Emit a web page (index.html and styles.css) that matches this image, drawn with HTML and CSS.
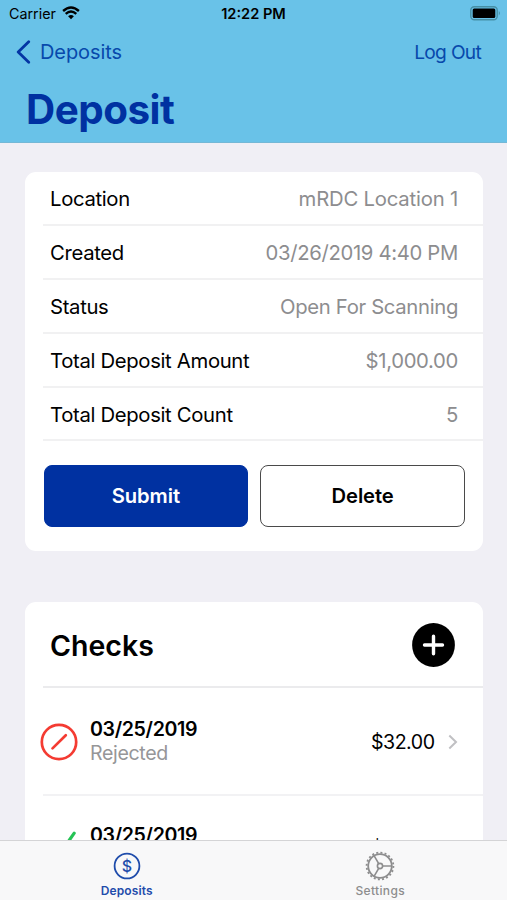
FILE: index.html
```html
<!DOCTYPE html>
<html lang="en">
<head>
<meta charset="utf-8">
<title>Deposit</title>
<link rel="stylesheet" href="styles.css">
</head>
<body>
<div class="app">
  <header class="header">
    <div class="status-bar">
      <div class="carrier"><span>Carrier</span>
        <svg class="wifi" viewBox="0 0 18 14"><path d="M9 13.3 6.1 10.3Q9 7.9 11.9 10.3Z" fill="#000"/><path d="M3.7 7.9Q9 3.3 14.3 7.9M1.1 5Q9-2 16.9 5" fill="none" stroke="#000" stroke-width="2.4"/></svg>
      </div>
      <div class="clock">12:22 PM</div>
      <svg class="battery" viewBox="0 0 31 15"><rect x=".8" y=".8" width="26.4" height="12.9" rx="3.5" fill="none" stroke="#468fa5" stroke-width="1.4"/><rect x="2.7" y="2.6" width="22.6" height="9.3" rx="1.5"/><path d="M28.8 5Q31 7.2 28.8 9.5Z" fill="#468fa5"/></svg>
    </div>
    <nav class="nav-bar">
      <a class="back"><svg viewBox="0 0 15 24"><path d="M12.7 1.7 2.2 12 12.7 22.3" fill="none" stroke="#0435a4" stroke-width="2.8" stroke-linecap="round" stroke-linejoin="round"/></svg><span>Deposits</span></a>
      <a class="logout">Log Out</a>
    </nav>
    <h1>Deposit</h1>
  </header>

  <main class="content">
    <section class="card summary">
      <dl class="rows">
        <div class="row"><dt>Location</dt><dd class="wide">mRDC Location 1</dd></div>
        <div class="row"><dt>Created</dt><dd>03/26/2019 4:40 PM</dd></div>
        <div class="row"><dt>Status</dt><dd>Open For Scanning</dd></div>
        <div class="row"><dt>Total Deposit Amount</dt><dd>$1,000.00</dd></div>
        <div class="row"><dt>Total Deposit Count</dt><dd>5</dd></div>
      </dl>
      <div class="actions">
        <button class="btn primary">Submit</button>
        <button class="btn outline">Delete</button>
      </div>
    </section>

    <section class="card checks">
      <div class="checks-head">
        <h2>Checks</h2>
        <svg class="add" viewBox="0 0 43 44"><ellipse cx="21.5" cy="22" rx="21.4" ry="22"/><path d="M21.5 13.3v17.4M12.5 22h18" stroke="#fff" stroke-width="3.4" stroke-linecap="round"/></svg>
      </div>
      <div class="check">
        <svg class="state" viewBox="0 0 38 38"><circle cx="19" cy="19" r="17.2" fill="none" stroke="#f43b32" stroke-width="2.7"/><path d="M12.5 25.4 25.8 12.2" stroke="#f43b32" stroke-width="2.7" stroke-linecap="round"/></svg>
        <div class="info"><strong>03/25/2019</strong><span>Rejected</span></div>
        <span class="price">$32.00</span>
        <svg class="chevron" viewBox="0 0 10 16"><path d="M1.3 1.5 8 8 1.3 14.5" fill="none" stroke="#c0c0c3" stroke-width="2"/></svg>
      </div>
      <div class="check">
        <svg class="state" viewBox="0 0 38 38"><path d="M8 21 16 30 34.2 4.2" fill="none" stroke="#25c355" stroke-width="3.2" stroke-linecap="round"/></svg>
        <div class="info"><strong>03/25/2019</strong></div>
        <span class="price">$</span>
      </div>
    </section>
  </main>

  <footer class="tab-bar">
    <a class="tab active">
      <svg viewBox="0 0 30 30"><circle cx="15" cy="15" r="12.4" fill="none" stroke="#1f4cab" stroke-width="1.8"/><text x="15" y="20.6" text-anchor="middle" class="dollar">$</text></svg>
      <span>Deposits</span>
    </a>
    <a class="tab">
      <svg viewBox="0 0 30 30" fill="none" stroke="#8d8d8e"><circle cx="15" cy="15" r="13.4" stroke-width="1.8" stroke-dasharray="2 2.21"/><circle cx="15" cy="15" r="11.8" stroke-width="1.8"/><circle cx="15" cy="15" r="2.6" stroke-width="1.6"/><path d="M17.6 15h9M13.7 12.7 9.2 4.9M13.7 17.3 9.2 25.1" stroke-width="1.6"/></svg>
      <span>Settings</span>
    </a>
  </footer>
</div>
</body>
</html>
```
FILE: styles.css
```css
* { box-sizing: border-box; }
body { margin: 0; font-family: Inter, "Liberation Sans", sans-serif; color: #000; }
.app { width: 507px; height: 900px; display: flex; flex-direction: column; overflow: hidden; background: #f0eff5; }

.header { flex: none; height: 143px; background: #69c2e8; border-bottom: 1px solid #74b8d6; }
.status-bar { height: 27px; display: grid; grid-template-columns: 1fr auto 1fr; align-items: center; padding: 0 7px 0 9px; font-size: 14.3px; }
.carrier { display: flex; align-items: center; gap: 6px; }
.wifi { width: 18px; height: 14px; margin-top: -2px; }
.clock { font-weight: 600; font-size: 14.6px; margin-left: -2px; }
.battery { width: 31px; height: 15px; justify-self: end; margin-right: -1px; }
.nav-bar { height: 50px; display: flex; align-items: center; justify-content: space-between; padding: 0 26px 0 16px; font-size: 20px; color: #0749ac; }
.back { display: flex; align-items: center; gap: 9px; letter-spacing: -.1px; }
.back svg { width: 15px; height: 24px; }
.logout { font-size: 19.2px; letter-spacing: -.75px; word-spacing: .2px; }
h1 { margin: 6px 0 0 26px; font-size: 40.4px; line-height: 53px; font-weight: 700; color: #0031a1; letter-spacing: -.5px; }

.content { flex: 1; min-height: 0; overflow: hidden; padding: 29px 24px 0 25px; }
.card { background: #fff; border-radius: 11px; }
.summary { height: 379px; }
.rows { margin: 0 0 0 18px; }
.row { height: 53.9px; display: flex; align-items: center; justify-content: space-between; padding: 2px 25px 0 7px; border-bottom: 2px solid #f1f1f2; font-size: 20.3px; letter-spacing: -.33px; }
dd { margin: 0; color: #8d8d8f; }
.wide { letter-spacing: -.2px; }
.actions { display: flex; gap: 12px; padding: 23.5px 18px 0 18.5px; }
.btn { flex: 1; height: 62px; border-radius: 8px; font: 600 20.2px Inter, sans-serif; letter-spacing: -.1px; padding: 0; }
.primary { background: #0031a1; color: #fff; border: 1px solid #0031a1; }
.outline { background: #fff; color: #000; border: 1.5px solid #4a4a4a; }

.checks { margin-top: 51px; }
.checks-head { height: 86px; margin-left: 18px; padding: 2px 28px 0 7px; border-bottom: 2px solid #ebebed; display: flex; align-items: center; justify-content: space-between; }
h2 { margin: 0; font-size: 28.5px; font-weight: 600; }
.add { width: 43px; height: 44px; }
.check { height: 106px; margin-left: 15px; padding: 2px 25px 0 0; display: flex; align-items: center; }
.check + .check { border-top: 2px solid #f2f2f4; margin-left: 18px; padding-top: 0; }
.check + .check .state { margin-left: -3px; }
.state { width: 38px; height: 38px; }
.info { height: 50px; margin-left: 12px; display: flex; flex-direction: column; font-size: 19.6px; line-height: 24px; letter-spacing: -.35px; }
.info strong { font-weight: 600; }
.info span { color: #969698; }
.price { width: 64px; margin-left: auto; font-size: 19.6px; letter-spacing: -.5px; white-space: nowrap; }
.chevron { width: 10px; height: 16px; margin-left: 13px; }
.check + .check .price { margin-right: 23px; }

.tab-bar { flex: none; height: 60px; display: flex; background: #f8f8f9; border-top: 1px solid #d4d4d6; }
.tab { flex: 1; display: flex; flex-direction: column; align-items: center; gap: 2px; padding-top: 10px; font-size: 12px; line-height: 15px; font-weight: 500; color: #8d8d8e; letter-spacing: .35px; }
.tab svg { width: 30px; height: 30px; }
.active { color: #1f4cab; font-weight: 600; letter-spacing: .15px; }
.dollar { font: 500 16px Inter, sans-serif; fill: #1f4cab; }
```
